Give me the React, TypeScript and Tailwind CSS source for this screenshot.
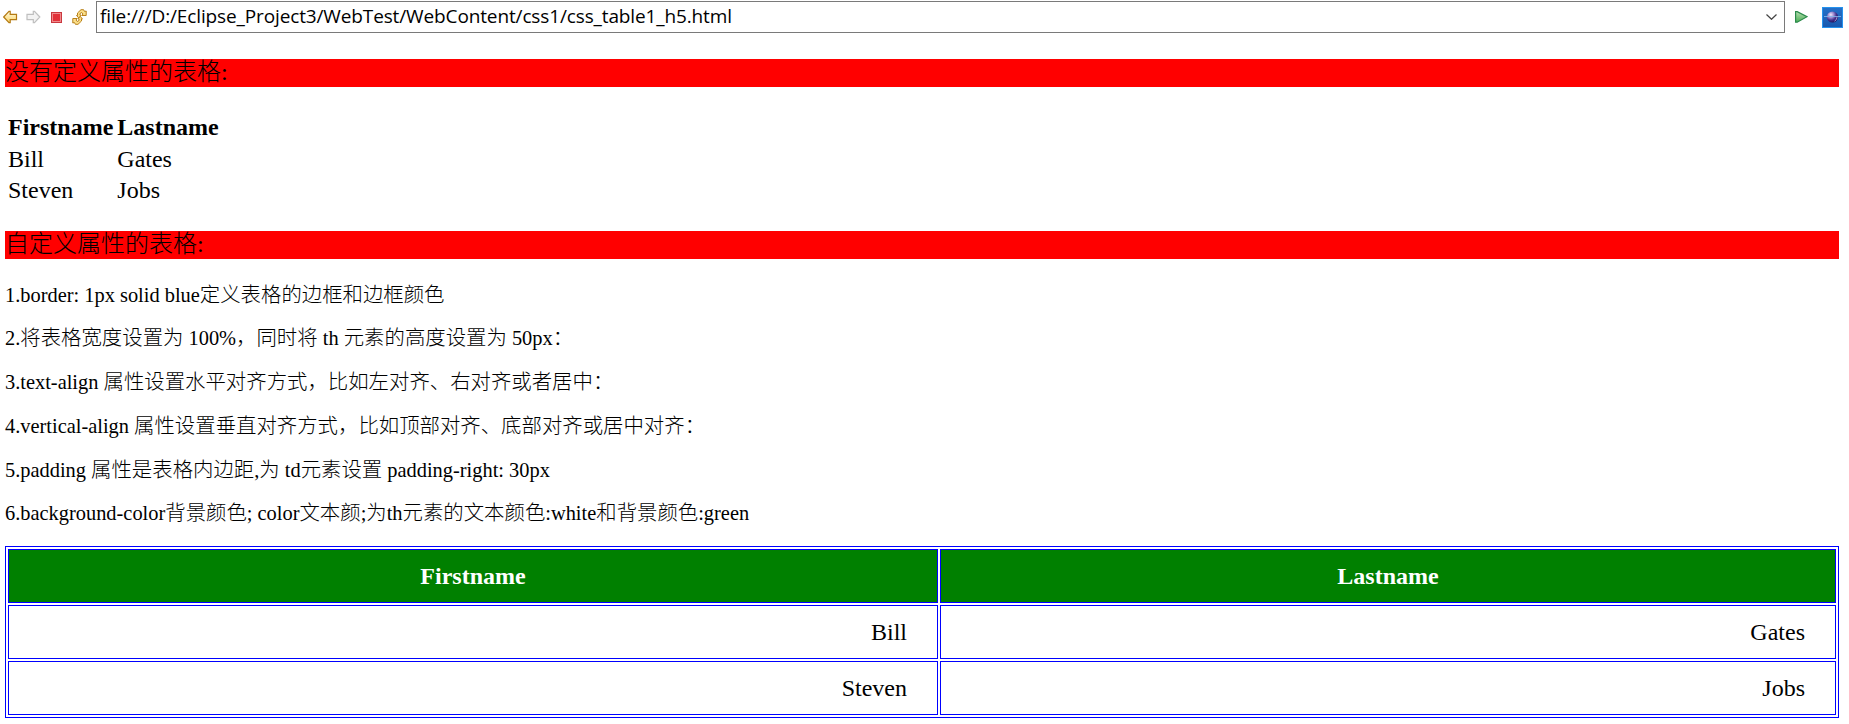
import React from "react";

const people = [
  ["Bill", "Gates"],
  ["Steven", "Jobs"],
];

const notes = [
  "1.border: 1px solid blue定义表格的边框和边框颜色",
  "2.将表格宽度设置为 100%，同时将 th 元素的高度设置为 50px：",
  "3.text-align 属性设置水平对齐方式，比如左对齐、右对齐或者居中：",
  "4.vertical-align 属性设置垂直对齐方式，比如顶部对齐、底部对齐或居中对齐：",
  "5.padding 属性是表格内边距,为 td元素设置 padding-right: 30px",
  "6.background-color背景颜色; color文本颜;为th元素的文本颜色:white和背景颜色:green",
];

function BackIcon() {
  return (
    <svg className="ml-[3px] h-[14px] w-[15px]" viewBox="0 0 15 14">
      <defs>
        <linearGradient id="back" x1="0" y1="0" x2="0" y2="1">
          <stop offset="0" stopColor="#fffbe0" />
          <stop offset="1" stopColor="#fbd568" />
        </linearGradient>
      </defs>
      <path d="M.7 7 6 1.400h1.200v3h6.300v5.200H7.200v3H6Z" fill="url(#back)" stroke="#b47a12" strokeWidth="1.2" />
    </svg>
  );
}

function ForwardIcon() {
  return (
    <svg className="ml-[8px] h-[14px] w-[15px]" viewBox="0 0 15 14">
      <path d="M13.800 7 8.500 1.400H7.300v3H1v5.200h6.300v3h1.200Z" fill="#f3f3f3" stroke="#bfbfbf" strokeWidth="1.2" />
    </svg>
  );
}

function StopIcon() {
  return (
    <svg className="ml-[10px] h-[11px] w-[11px]" viewBox="0 0 11 11">
      <rect x=".5" y=".5" width="10" height="10" fill="#f08a8c" stroke="#c9383f" />
      <rect x="2" y="2" width="7" height="7" fill="#e2323a" />
    </svg>
  );
}

function RefreshIcon() {
  return (
    <svg className="ml-[10px] h-[16px] w-[15px]" viewBox="0 0 15 16">
      <g fill="#fbe08a" stroke="#b8801a" strokeWidth="1" strokeLinejoin="round">
        <path d="M9 .7h2.600l1 1.800 1.600-.5v4.500H9.800L11 5 9.800 3.500 8 4.500v1.700h1L6.800 9 4.500 6.500h1V4Z" />
        <path d="M6 15.300H3.400l-1-1.800-1.600.5V9.500h4.400L4 11l1.200 1.500L7 11.500V9.800H6L8.200 7.500l2.300 2.300h-1V12Z" />
      </g>
    </svg>
  );
}

function RunIcon() {
  return (
    <svg className="ml-[10px] h-[12px] w-[13px]" viewBox="0 0 13 12">
      <defs>
        <linearGradient id="run" x1="0" y1="0" x2="0" y2="1">
          <stop offset="0" stopColor="#b6deb0" />
          <stop offset="1" stopColor="#4bae55" />
        </linearGradient>
      </defs>
      <path d="M.6.6h1.600L12 5.700 2.200 11.200H.6Z" fill="url(#run)" stroke="#2b8a4b" strokeWidth="1.2" />
    </svg>
  );
}

function BrowserIcon() {
  return (
    <svg className="ml-[14px] h-[21px] w-[21px]" viewBox="0 0 21 21">
      <defs>
        <linearGradient id="tile" x1="0" y1="0" x2="0" y2="1">
          <stop offset="0" stopColor="#2470c8" />
          <stop offset="1" stopColor="#1858ae" />
        </linearGradient>
        <radialGradient id="globe" cx=".35" cy=".3" r=".75">
          <stop offset="0" stopColor="#efe8fa" />
          <stop offset=".35" stopColor="#9c8bd0" />
          <stop offset=".65" stopColor="#45308c" />
          <stop offset="1" stopColor="#1c1058" />
        </radialGradient>
      </defs>
      <rect x=".5" y=".5" width="20" height="20" fill="url(#tile)" stroke="#2492ee" />
      <circle cx="10.500" cy="10" r="5.600" fill="url(#globe)" />
      <path d="M12.500 14.200a4.800 4.800 0 0 0 2.500-4" fill="none" stroke="#a99ad6" strokeWidth="1" />
      <path d="M2 9.500h17" stroke="#83b4ea" strokeWidth="1" opacity=".85" />
    </svg>
  );
}

function Toolbar() {
  return (
    <div className="flex h-[34px] items-start">
      <div className="flex h-[34px] w-[96px] items-center">
        <BackIcon />
        <ForwardIcon />
        <StopIcon />
        <RefreshIcon />
      </div>
      <div className="mt-px flex h-[32px] w-[1689px] items-center justify-between border border-[#7a7a7a] pr-[7px] pl-[3px]">
        <span className="w-[640px] whitespace-nowrap pb-[2px] font-['Open_Sans','Noto_Sans',sans-serif] text-[19px] leading-[28px] tracking-[-0.13px]">
          file:///D:/Eclipse_Project3/WebTest/WebContent/css1/css_table1_h5.html
        </span>
        <svg className="h-[6px] w-[11px]" viewBox="0 0 11 6">
          <path d="m.5.5 5 4.800 5-4.800" fill="none" stroke="#444" strokeWidth="1.200" />
        </svg>
      </div>
      <div className="flex h-[34px] items-center">
        <RunIcon />
        <BrowserIcon />
      </div>
    </div>
  );
}

function Banner({ children }: { children: React.ReactNode }) {
  return <h2 className="h-[28px] whitespace-nowrap bg-[#ff0000] font-light leading-[26px]">{children}</h2>;
}

export default function App() {
  return (
    <div lang="zh-CN" className="h-[724px] w-[1849px] overflow-hidden bg-white text-black">
      <Toolbar />
      <main className="w-[1839px] pt-[25px] pl-[5px] font-['Liberation_Serif','Noto_Sans_CJK_SC',serif] text-[24px]">
        <Banner>没有定义属性的表格:</Banner>

        <table className="mt-[24px] border-separate border-spacing-[2px]">
          <thead>
            <tr>
              {["Firstname", "Lastname"].map((h) => (
                <th key={h} className="h-[29.500px] p-px text-left leading-[27px] font-bold">{h}</th>
              ))}
            </tr>
          </thead>
          <tbody>
            {people.map((row) => (
              <tr key={row[0]}>
                {row.map((cell) => (
                  <td key={cell} className="h-[29.500px] p-px leading-[27px]">{cell}</td>
                ))}
              </tr>
            ))}
          </tbody>
        </table>

        <div className="mt-[23px]">
          <Banner>自定义属性的表格:</Banner>
        </div>

        <div className="mt-[24px] h-[263px] text-[20.400px] font-light">
          {notes.map((note) => (
            <p key={note} className="h-[43.800px] whitespace-nowrap leading-[24px]">{note}</p>
          ))}
        </div>

        <table className="w-full table-fixed border-separate border-spacing-[2px] border border-[#0000ff]">
          <colgroup>
            <col className="w-[930px]" />
            <col className="w-[896px]" />
          </colgroup>
          <thead>
            <tr>
              {["Firstname", "Lastname"].map((h) => (
                <th key={h} className="h-[54px] border border-[#0000ff] bg-[#008000] p-px text-center leading-[28px] font-bold text-white">{h}</th>
              ))}
            </tr>
          </thead>
          <tbody>
            {people.map((row) => (
              <tr key={row[0]}>
                {row.map((cell) => (
                  <td key={cell} className="h-[54px] border border-[#0000ff] py-px pr-[30px] pl-px text-right leading-[28px]">{cell}</td>
                ))}
              </tr>
            ))}
          </tbody>
        </table>
      </main>
    </div>
  );
}
